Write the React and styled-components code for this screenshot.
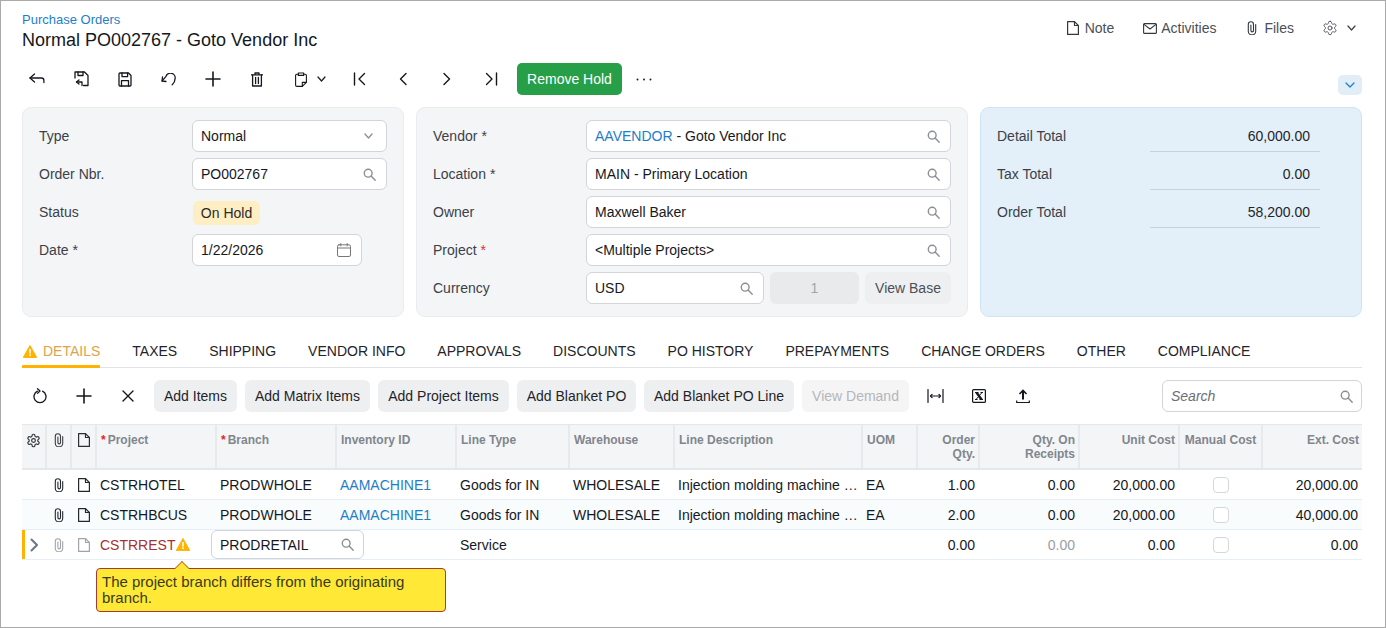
import React from "react";
import styled, { createGlobalStyle } from "styled-components";

const Global = createGlobalStyle`
  html, body { margin: 0; padding: 0; background: #fff; }
  body { font-family: "Liberation Sans", Arial, sans-serif; font-size: 14px; color: #1b1f23; }
  * { box-sizing: border-box; }
`;

const Frame = styled.div`
  width: 1386px; height: 628px; border: 1px solid #a9a9a9; padding: 0 23px 0 21px; overflow: hidden; position: relative;
`;
const Header = styled.header`
  display: flex; justify-content: space-between; height: 62px; padding-top: 10px;
`;
const TitleBlock = styled.div`display: flex; flex-direction: column;`;
const Crumb = styled.a`font-size: 13px; line-height: 16px; margin-top: 1px; color: #1e7ec8;`;
const Title = styled.h1`font-size: 18px; line-height: 24px; font-weight: 400; margin: 0; color: #14181c;`;
const HeaderActions = styled.div`display: flex; align-items: center; height: 34px; margin-right: 6px; color: #4e5660;`;
const HeaderAction = styled.span`
  display: inline-flex; align-items: center; gap: ${p => p.$gap ?? 4}px; margin-left: ${p => p.$ml ?? 0}px; font-size: 14px; color: #4a5058;
`;

const Toolbar = styled.div`display: flex; align-items: center; height: 32px; margin-left: -7px; position: relative;`;
const IconBtn = styled.span`
  width: ${p => p.$w ?? 44}px; height: 32px; display: inline-flex; align-items: center; justify-content: center; gap: ${p => p.$gap ?? 0}px; padding-left: ${p => p.$pl ?? 0}px; color: #14181e; flex: none;
`;
const PrimaryBtn = styled.button`
  height: 32px; width: 105px; margin-left: 4px; border: 0; border-radius: 5px; background: #279f48; color: #fff; font: 14px "Liberation Sans", Arial, sans-serif; padding: 0;
`;
const Dots = styled.span`width: 43px; display: inline-flex; justify-content: center; color: #1d2228;`;
const Collapse = styled.span`
  position: absolute; right: 0; top: 12px; width: 24px; height: 20px; border-radius: 5px; background: #e1eef8; color: #1e7ec8; display: flex; align-items: center; justify-content: center;
`;

const Panels = styled.div`display: flex; gap: 12px; margin-top: 12px; height: 210px;`;
const Panel = styled.section`
  width: ${p => p.$w}px; flex: none; border-radius: 9px; padding: 12px 16px;
  background: ${p => p.$blue ? "#e3f0f9" : "#f4f5f7"};
  border: 1px solid ${p => p.$blue ? "#cfe4f3" : "#eaebee"};
  display: flex; flex-direction: column; gap: 6px;
`;
const Row = styled.div`display: flex; align-items: center; height: 32px;`;
const Label = styled.label`width: ${p => p.$w}px; flex: none; color: #3b4148; font-size: 14px;`;
const Req = styled.span`color: ${p => p.$red ? "#d9303b" : "#3b4148"}; margin-left: 4px;`;
const Field = styled.div`
  width: ${p => p.$w ?? 195}px; height: 32px; flex: none; display: flex; align-items: center; justify-content: space-between;
  padding: 0 ${p => p.$pr ?? 10}px 0 8px; background: #fff; border: 1px solid #d2d4d9; border-radius: 6px; color: #15191e; font-size: 14px; white-space: nowrap;
`;
const DisabledField = styled.div`
  width: 89px; height: 32px; margin-left: 6px; border-radius: 6px; background: #e9eaec; color: #a2a6ab; display: flex; align-items: center; justify-content: center; font-size: 14px;
`;
const GrayBtn = styled.button`
  height: ${p => p.$h ?? 32}px; width: ${p => p.$w}px; flex: none; margin-left: ${p => p.$ml ?? 0}px; border: 0; border-radius: 6px; padding: 0;
  background: ${p => p.$off ? "#f5f5f6" : "#eeeff1"}; color: ${p => p.$off ? "#b3b6ba" : p.$soft ? "#4b5057" : "#1f2429"};
  font: 14px "Liberation Sans", Arial, sans-serif;
`;
const Pill = styled.span`
  margin: 2px 0 0 1px; height: 24px; width: 67px; border-radius: 6px; background: #fdeec3; display: flex; align-items: center; justify-content: center; color: #2a2a2a; font-size: 14px;
`;
const Link = styled.span`color: #1e7ec8;`;
const Total = styled.div`
  width: 170px; height: 32px; flex: none; margin-left: 49px; padding-right: 10px; text-align: right; line-height: 32px; border-bottom: 1px solid #c7d3dc; color: #1f2429;
`;

const Tabs = styled.nav`display: flex; height: 36px; margin-top: 15px; border-bottom: 1px solid #e1e3e6; padding-top: 10px;`;
const Tab = styled.span`
  display: inline-flex; align-items: flex-start; gap: 6px; height: 26px; padding: 0 0 0 ${p => p.$first ? 1 : 0}px; margin-right: 32px; line-height: 18px; font-size: 14px; position: relative;
  color: ${p => p.$active ? "#e0a24a" : "#1f242b"}; white-space: nowrap;
  svg { margin-top: 3px; }
  ${p => p.$active && `&::after { content: ""; position: absolute; left: 0; right: 0; bottom: 0; height: 3px; background: #ffb300; border-radius: 1px 1px 0 0; }`}
`;

const GridBar = styled.div`display: flex; align-items: center; height: 32px; margin-top: 12px;`;
const GridIcons = styled.div`display: flex; margin-left: -4px; width: 136px; flex: none;`;
const GridIcon = styled.span`width: 44px; height: 32px; display: inline-flex; align-items: center; justify-content: center; color: #14181e; flex: none; margin-left: ${p => p.$ml ?? 0}px;`;
const GridButtons = styled.div`display: flex; gap: 8px;`;
const SearchBox = styled.div`
  margin-left: auto; width: 200px; height: 32px; display: flex; align-items: center; justify-content: space-between; padding: 0 8px; border: 1px solid #d2d4d9; border-radius: 6px; color: #6a6f76; font-style: italic; font-size: 14px;
`;

const TableWrap = styled.div`margin-top: 12px; position: relative;`;
const Table = styled.table`width: 1340px; table-layout: fixed; border-collapse: separate; border-spacing: 0;`;
const Th = styled.th`
  height: 46px; background: #f4f5f7; border-top: 1px solid #e6e7ea; border-bottom: 2px solid #e6e7ea; border-right: ${p => p.$last ? 0 : "2px solid #e8e9ec"};
  font-size: 12px; font-weight: 700; color: #81868d; line-height: 14px; vertical-align: top; padding: 8px 3px 0 ${p => p.$icon ? 0 : 4}px;
  text-align: ${p => p.$right ? "right" : p.$center ? "center" : "left"};
  ${p => p.$icon && "padding-right: 0;"}
  ${p => p.$tight && "padding-left: 0; padding-right: 0;"}
`;
const Star = styled.span`color: #e8202a; margin-right: 2px;`;
const Tr = styled.tr`background: ${p => p.$alt ? "#f8fcfd" : "#fff"};`;
const Td = styled.td`
  height: 30px; padding: 0 ${p => p.$last ? 4 : 5}px 0 3px; font-size: 14px; border-bottom: 1px solid #e5eff5; white-space: nowrap; overflow: hidden;
  text-align: ${p => p.$right ? "right" : p.$center ? "center" : "left"};
  color: ${p => p.$muted ? "#9a9ea3" : p.$err ? "#a5322f" : "#15191e"};
  position: relative;
`;
const IconCell = styled(Td)`padding: 0 1px 0 0; text-align: center; line-height: 0;`;
const Marker = styled.span`position: absolute; left: 0; top: 0; bottom: 0; width: 3px; background: #ffb300;`;
const ErrText = styled.span`display: inline-flex; align-items: center; gap: 1px;`;
const Check = styled.span`display: inline-block; vertical-align: middle; width: 16px; height: 16px; border: 1px solid #d6d7da; border-radius: 4px; background: #fff;`;
const RowEditor = styled.div`
  position: absolute; left: 189px; top: 106px; width: 153px; height: 29px; background: #fff; border: 1px solid #d2d4d9; border-radius: 6px; display: flex; align-items: center; justify-content: space-between; padding: 0 9px 0 8px; font-size: 14px; color: #15191e;
`;
const Tip = styled.div`
  position: absolute; left: 74px; top: 144px; width: 350px; height: 44px; background: #ffe936; border: 1px solid #a63a36; border-radius: 4px; padding: 5px 5px 0; font-size: 15px; line-height: 16px; color: #3a3a1e;
  &::before { content: ""; position: absolute; left: 80px; top: -6px; width: 9px; height: 9px; background: #ffe936; border-left: 1px solid #c9743c; border-top: 1px solid #c9743c; transform: rotate(45deg); }
`;

const S = ({ w = 16, h = 16, vb, children, sw = 1.3, color }) => (
  <svg width={w} height={h} viewBox={vb || `0 0 ${w} ${h}`} fill="none" stroke={color || "currentColor"} strokeWidth={sw} strokeLinecap="round" strokeLinejoin="round" style={{ flex: "none" }}>{children}</svg>
);
const Search = ({ c = "#8a8e94" }) => (
  <S w={13} h={13} sw={1.4} color={c}><circle cx="5.2" cy="5.2" r="3.9" /><path d="M8.1 8.1 12.2 12.2" /></S>
);
const Chevron = ({ c = "#777", s = 10 }) => (
  <S w={s} h={6} sw={1.3} color={c}><path d={`M1 1 ${s / 2} 5 ${s - 1} 1`} /></S>
);
const DocIcon = ({ c, w = 12, h = 14 }) => (
  <S w={w} h={h} sw={1.2} color={c}><path d={`M.6.6H${w - 4.5}L${w - .6} 4.5V${h - .6}H.6Z`} /><path d={`M${w - 4.5} .6V4.5H${w - .6}`} /></S>
);
const Clip = ({ c }) => (
  <S w={10} h={14} sw={1.1} color={c}><path d="M8.7 3.5V10.2a3.7 3.7 0 0 1-7.4 0V3.4a2.6 2.6 0 0 1 5.2 0V9.600a1.300 1.300 0 0 1-2.600 0V4" /></S>
);
const Gear = ({ c = "#4a5058", s = 14, sw = 1.6 }) => (
  <svg width={s} height={s} viewBox="0 0 24 24" fill="none" stroke={c} strokeWidth={sw} strokeLinecap="round" strokeLinejoin="round" style={{ flex: "none" }}>
    <path d="M12.22 2h-.44a2 2 0 0 0-2 2v.18a2 2 0 0 1-1 1.73l-.43.25a2 2 0 0 1-2 0l-.15-.08a2 2 0 0 0-2.73.73l-.22.38a2 2 0 0 0 .73 2.73l.15.1a2 2 0 0 1 1 1.72v.51a2 2 0 0 1-1 1.74l-.15.09a2 2 0 0 0-.73 2.73l.22.38a2 2 0 0 0 2.73.73l.15-.08a2 2 0 0 1 2 0l.43.25a2 2 0 0 1 1 1.73V20a2 2 0 0 0 2 2h.44a2 2 0 0 0 2-2v-.18a2 2 0 0 1 1-1.73l.43-.25a2 2 0 0 1 2 0l.15.08a2 2 0 0 0 2.73-.73l.22-.39a2 2 0 0 0-.73-2.73l-.15-.08a2 2 0 0 1-1-1.74v-.5a2 2 0 0 1 1-1.74l.15-.09a2 2 0 0 0 .73-2.73l-.22-.38a2 2 0 0 0-2.73-.73l-.15.08a2 2 0 0 1-2 0l-.43-.25a2 2 0 0 1-1-1.73V4a2 2 0 0 0-2-2z" />
    <circle cx="12" cy="12" r="3" />
  </svg>
);
const Warn = ({ s = 14 }) => (
  <svg width={s} height={s - 1} viewBox="0 0 14 13" style={{ flex: "none" }}>
    <path d="M7 .5 13.700 12.400H.3Z" fill="#ffb300" stroke="#ffb300" strokeLinejoin="round" />
    <rect x="6.200" y="4" width="1.600" height="4.600" fill="#fff" /><rect x="6.200" y="9.400" width="1.600" height="1.600" fill="#fff" />
  </svg>
);
const Plus = () => <S w={16} h={16} sw={1.6}><path d="M8 1v14M1 8h14" /></S>;

const COLS = [25, 25, 25, 120, 120, 120, 113, 105, 188, 55, 62, 100, 100, 83, 99];
const TABS = ["TAXES", "SHIPPING", "VENDOR INFO", "APPROVALS", "DISCOUNTS", "PO HISTORY", "PREPAYMENTS", "CHANGE ORDERS", "OTHER", "COMPLIANCE"];
const ROWS = [
  { p: "CSTRHOTEL", q: "1.00", e: "20,000.00" },
  { p: "CSTRHBCUS", q: "2.00", e: "40,000.00", alt: true },
];

export default function App() {
  return (
    <Frame>
      <Global />
      <Header>
        <TitleBlock>
          <Crumb>Purchase Orders</Crumb>
          <Title>Normal PO002767 - Goto Vendor Inc</Title>
        </TitleBlock>
        <HeaderActions>
          <HeaderAction $gap={6}><DocIcon c="#33383e" /> Note</HeaderAction>
          <HeaderAction $ml={29}>
            <S w={14} h={11} sw={1.1} color="#33383e"><rect x=".6" y=".6" width="12.800" height="9.800" rx="1" /><path d="M1 1.400 7 6l6-4.600" /></S> Activities
          </HeaderAction>
          <HeaderAction $ml={31} $gap={7}><Clip c="#33383e" /> Files</HeaderAction>
          <HeaderAction $ml={28} $gap={9}><Gear s={16} sw={1.4} /><Chevron c="#444" s={9} /></HeaderAction>
        </HeaderActions>
      </Header>

      <Toolbar>
        <IconBtn><S w={16} h={12}><path d="M5.500 1 1 5l4.500 4" /><path d="M1 5h11.500a2.400 2.400 0 0 1 2.400 2.400V9.500" /></S></IconBtn>
        <IconBtn><S w={16} h={16}><path d="M2 7V1h9.500L15 4.500v10h-4.500" /><path d="M5 1v3.500h5V1" /><path d="M6 9 3.500 11 6 13" /><path d="M3.500 11h5.500v3.500" /></S></IconBtn>
        <IconBtn><S w={14} h={15}><path d="M2 1h8.500L13 3.500V13a1 1 0 0 1-1 1H2a1 1 0 0 1-1-1V2a1 1 0 0 1 1-1Z" /><path d="M4 1v3.600h5.600V1" /><path d="M3.500 14V8.600h7V14" /></S></IconBtn>
        <IconBtn><S w={16} h={13}><path d="M5 8.500 1 8 1.500 4" /><path d="M1.200 7.800 5 3.300A4.700 4.700 0 0 1 14 6c0 2.300-1.200 4.400-2.800 5.800" /></S></IconBtn>
        <IconBtn><Plus /></IconBtn>
        <IconBtn><S w={12} h={15}><path d="M.5 2.800h11M4 2.800V1h4v1.800" /><path d="M1.600 2.800V14h8.800V2.800" /><path d="M4.600 5.500v6M7.400 5.500v6" /></S></IconBtn>
        <IconBtn $w={58} $gap={10} $pl={4}>
          <S w={12} h={15} sw={1.1}><path d="M3.300 2.200H1.800a1.200 1.200 0 0 0-1.200 1.200v9.800a1.200 1.200 0 0 0 1.200 1.200h5.500L11.400 10.400V3.400a1.200 1.200 0 0 0-1.200-1.200H8.700" /><path d="M3.300 1h5.400v2.400H3.300Z" /><path d="M7.300 14.400V10.400h4.100" /></S>
          <Chevron c="#1d2228" s={9} />
        </IconBtn>
        <IconBtn><S w={13} h={14} sw={1.4}><path d="M1.500 1v12" /><path d="M11.500 1.500 6 7l5.500 5.500" /></S></IconBtn>
        <IconBtn><S w={8} h={14} sw={1.4}><path d="M7 1.500 1.500 7 7 12.500" /></S></IconBtn>
        <IconBtn><S w={8} h={14} sw={1.4}><path d="M1 1.500 6.500 7 1 12.500" /></S></IconBtn>
        <IconBtn><S w={13} h={14} sw={1.4}><path d="M11.500 1v12" /><path d="M1.500 1.500 7 7l-5.500 5.500" /></S></IconBtn>
        <PrimaryBtn>Remove Hold</PrimaryBtn>
        <Dots><svg width="16" height="3" viewBox="0 0 16 3"><circle cx="1.500" cy="1.500" r="1" fill="currentColor" /><circle cx="8" cy="1.500" r="1" fill="currentColor" /><circle cx="14.500" cy="1.500" r="1" fill="currentColor" /></svg></Dots>
        <Collapse><Chevron c="#1e7ec8" s={10} /></Collapse>
      </Toolbar>

      <Panels>
        <Panel $w={382}>
          <Row><Label $w={153}>Type</Label><Field $pr={13}>Normal<Chevron s={9} c="#8a8e94" /></Field></Row>
          <Row><Label $w={153}>Order Nbr.</Label><Field>PO002767<Search /></Field></Row>
          <Row><Label $w={153}>Status</Label><Pill>On Hold</Pill></Row>
          <Row><Label $w={153}>Date<Req>*</Req></Label>
            <Field $w={170}>1/22/2026
              <S w={14} h={14} sw={1} color="#777"><rect x=".5" y="1.800" width="13" height="11.700" rx="1.500" /><path d="M.5 5h13M3.800.5v2.400M10.200.5v2.400" /></S>
            </Field>
          </Row>
        </Panel>
        <Panel $w={552}>
          <Row><Label $w={153}>Vendor<Req>*</Req></Label><Field $w={365}><span><Link>AAVENDOR</Link> - Goto Vendor Inc</span><Search /></Field></Row>
          <Row><Label $w={153}>Location<Req>*</Req></Label><Field $w={365}>MAIN - Primary Location<Search /></Field></Row>
          <Row><Label $w={153}>Owner</Label><Field $w={365}>Maxwell Baker<Search /></Field></Row>
          <Row><Label $w={153}>Project<Req $red>*</Req></Label><Field $w={365}>{"<Multiple Projects>"}<Search /></Field></Row>
          <Row><Label $w={153}>Currency</Label><Field $w={178}>USD<Search /></Field><DisabledField>1</DisabledField><GrayBtn $w={86} $ml={6} $soft>View Base</GrayBtn></Row>
        </Panel>
        <Panel $w={382} $blue>
          <Row><Label $w={104}>Detail Total</Label><Total>60,000.00</Total></Row>
          <Row><Label $w={104}>Tax Total</Label><Total>0.00</Total></Row>
          <Row><Label $w={104}>Order Total</Label><Total>58,200.00</Total></Row>
        </Panel>
      </Panels>

      <Tabs>
        <Tab $active $first><Warn />DETAILS</Tab>
        {TABS.map(t => <Tab key={t}>{t}</Tab>)}
      </Tabs>

      <GridBar>
        <GridIcons>
          <GridIcon><S w={14} h={16} sw={1.3}><path d="M4.500 3.200A6 6 0 1 0 9.500 3.200" /><path d="M4.500 .8 7 3 4.500 5.400" /></S></GridIcon>
          <GridIcon><Plus /></GridIcon>
          <GridIcon><S w={12} h={12} sw={1.4}><path d="m1 1 10 10M11 1 1 11" /></S></GridIcon>
        </GridIcons>
        <GridButtons>
          <GrayBtn $w={83}>Add Items</GrayBtn>
          <GrayBtn $w={125}>Add Matrix Items</GrayBtn>
          <GrayBtn $w={131}>Add Project Items</GrayBtn>
          <GrayBtn $w={119}>Add Blanket PO</GrayBtn>
          <GrayBtn $w={150}>Add Blanket PO Line</GrayBtn>
          <GrayBtn $w={107} $off>View Demand</GrayBtn>
        </GridButtons>
        <GridIcon $ml={4}>
          <S w={17} h={14} sw={1.2}><path d="M1 .5v13M16 .5v13M3.500 7h10" /><path d="M5 5.500 3.500 7 5 8.500M12 5.500 13.500 7 12 8.500" /></S>
        </GridIcon>
        <GridIcon>
          <svg width="14" height="14" viewBox="0 0 14 14" fill="none" stroke="currentColor"><rect x=".6" y=".6" width="12.800" height="12.800" rx="1" strokeWidth="1.200" /><path d="M4.500 3.500 9.500 10.500" strokeWidth="2.400" /><path d="M10 3.500 4 10.500" strokeWidth="1" /><path d="M3 3.500h3.500M8.500 3.500H11M3 10.500h2.500M7.500 10.500H11" strokeWidth="1" /></svg>
        </GridIcon>
        <GridIcon>
          <svg width="14" height="15" viewBox="0 0 14 15" fill="none" stroke="currentColor"><path d="M7 10.500V2" strokeWidth="2" /><path d="M3.500 5 7 1.500 10.500 5" strokeWidth="1.600" /><path d="M.7 11.500v2h12.600v-2" strokeWidth="1.200" /></svg>
        </GridIcon>
        <SearchBox>Search<Search /></SearchBox>
      </GridBar>

      <TableWrap>
        <Table>
          <colgroup>{COLS.map((w, i) => <col key={i} style={{ width: w }} />)}</colgroup>
          <thead>
            <tr>
              <Th $center $icon><Gear c="#33383e" s={15} sw={1.9} /></Th>
              <Th $center $icon><Clip c="#3a3f45" /></Th>
              <Th $center $icon><DocIcon c="#2a2f35" /></Th>
              <Th><Star>*</Star>Project</Th>
              <Th><Star>*</Star>Branch</Th>
              <Th>Inventory ID</Th>
              <Th>Line Type</Th>
              <Th>Warehouse</Th>
              <Th>Line Description</Th>
              <Th>UOM</Th>
              <Th $right>Order<br />Qty.</Th>
              <Th $right>Qty. On<br />Receipts</Th>
              <Th $right>Unit Cost</Th>
              <Th $center $tight>Manual Cost</Th>
              <Th $right $last>Ext. Cost</Th>
            </tr>
          </thead>
          <tbody>
            {ROWS.map(r => (
              <Tr key={r.p} $alt={r.alt}>
                <IconCell />
                <IconCell><Clip c="#23282e" /></IconCell>
                <IconCell><DocIcon c="#23282e" /></IconCell>
                <Td>{r.p}</Td>
                <Td>PRODWHOLE</Td>
                <Td><Link>AAMACHINE1</Link></Td>
                <Td>Goods for IN</Td>
                <Td>WHOLESALE</Td>
                <Td>Injection molding machine …</Td>
                <Td>EA</Td>
                <Td $right>{r.q}</Td>
                <Td $right>0.00</Td>
                <Td $right>20,000.00</Td>
                <Td $center><Check /></Td>
                <Td $right $last>{r.e}</Td>
              </Tr>
            ))}
            <Tr>
              <IconCell><Marker /><S w={9} h={14} sw={2} color="#6c7580"><path d="M1.500 1.500 7 7l-5.500 5.500" /></S></IconCell>
              <IconCell><Clip c="#a0a4a9" /></IconCell>
              <IconCell><DocIcon c="#a0a4a9" /></IconCell>
              <Td $err><ErrText>CSTRREST<Warn /></ErrText></Td>
              <Td />
              <Td />
              <Td>Service</Td>
              <Td />
              <Td />
              <Td />
              <Td $right>0.00</Td>
              <Td $right $muted>0.00</Td>
              <Td $right>0.00</Td>
              <Td $center><Check /></Td>
              <Td $right $last>0.00</Td>
            </Tr>
          </tbody>
        </Table>
        <RowEditor>PRODRETAIL<Search /></RowEditor>
        <Tip>The project branch differs from the originating branch.</Tip>
      </TableWrap>
    </Frame>
  );
}
